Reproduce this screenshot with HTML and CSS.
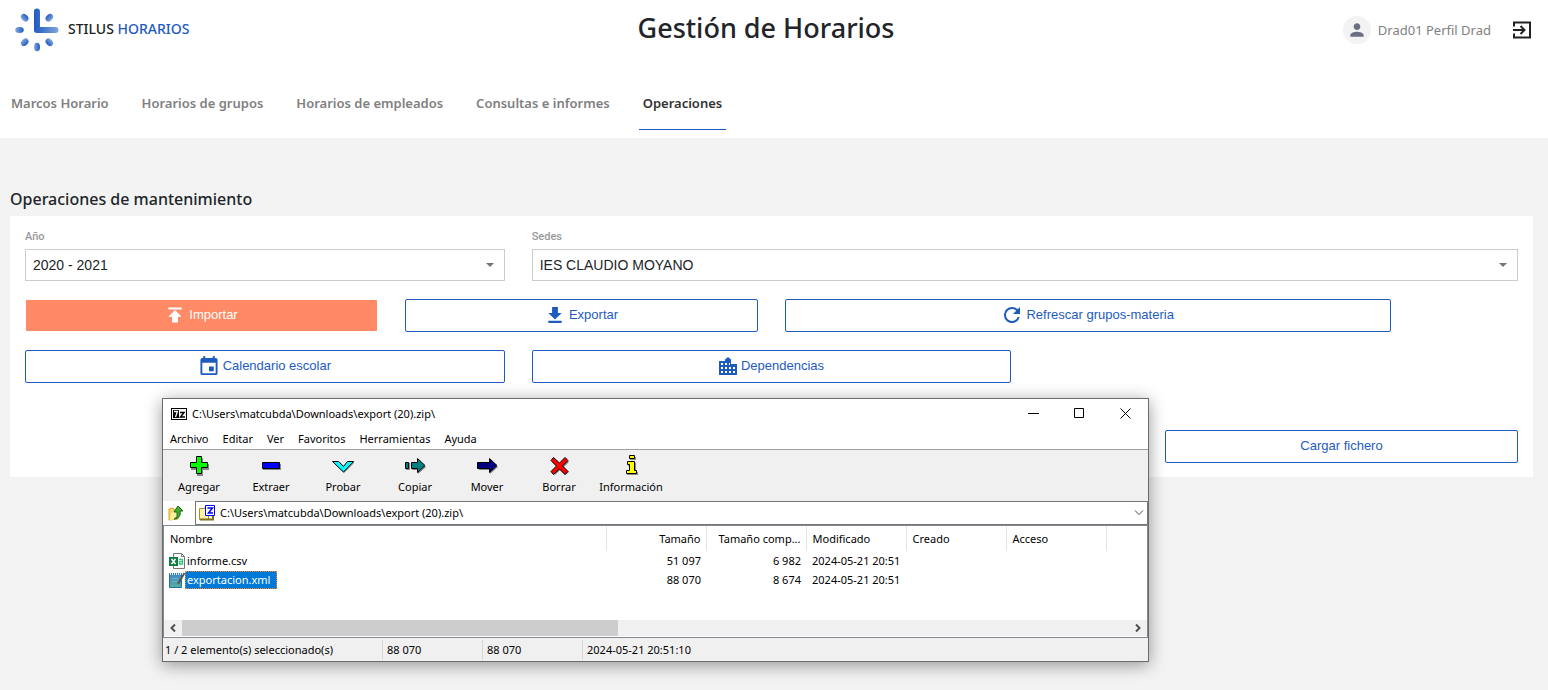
FILE: index.html
```html
<!DOCTYPE html>
<html lang="es">
<head>
  <meta charset="UTF-8" />
  <meta name="viewport" content="width=device-width, initial-scale=1.0" />
  <title>Stilus Horarios - Gestión de Horarios</title>
  <link rel="stylesheet" href="styles.css">
</head>
<body>
  <header class="header">
    <div class="topbar">
      <a class="brand" href="#">
        <svg width="44" height="44" viewBox="0 0 44 44">
          <defs>
            <linearGradient id="g-right"><stop offset="0" stop-color="#1d5bbf" /><stop offset="1" stop-color="#86a8dd" /></linearGradient>
            <linearGradient id="g-left"><stop offset="0" stop-color="#86a8dd" /><stop offset="1" stop-color="#1d5bbf" /></linearGradient>
            <linearGradient id="g-hand" gradientUnits="userSpaceOnUse" x1="19" y1="0" x2="44" y2="0"><stop offset="0" stop-color="#1d5bbf" /><stop offset="0.3" stop-color="#3b70c8" /><stop offset="1" stop-color="#86a8dd" /></linearGradient>
          </defs>
          <path d="M19 3.5a3 3 0 0 1 6 0V19h15.500a3 3 0 0 1 0 6H22a3 3 0 0 1-3-3z" fill="url(#g-hand)" />
          <ellipse cx="22" cy="39" rx="3" ry="4.300" fill="url(#g-left)" />
          <ellipse cx="4.500" cy="22" rx="4.300" ry="3" fill="url(#g-left)" />
          <ellipse cx="9.700" cy="9.700" rx="3.200" ry="4.200" transform="rotate(-45 9.700 9.700)" fill="url(#g-left)" />
          <ellipse cx="34.300" cy="9.700" rx="3.200" ry="4.200" transform="rotate(45 34.300 9.700)" fill="url(#g-right)" />
          <ellipse cx="9.700" cy="34.300" rx="3.200" ry="4.200" transform="rotate(45 9.700 34.300)" fill="url(#g-left)" />
          <ellipse cx="34.300" cy="34.300" rx="3.200" ry="4.200" transform="rotate(-45 34.300 34.300)" fill="url(#g-right)" />
        </svg>
        <span class="brand-name">STILUS <span class="brand-blue">HORARIOS</span></span>
      </a>
      <h1>Gestión de Horarios</h1>
      <div class="user">
        <span class="avatar">
          <svg width="24" height="24" viewBox="0 0 24 24" fill="#6b6f82"><path d="M12 12c2.210 0 4-1.790 4-4s-1.790-4-4-4-4 1.790-4 4 1.790 4 4 4zm0 2c-2.670 0-8 1.340-8 4v2h16v-2c0-2.660-5.330-4-8-4z" /></svg>
        </span>
        <span class="user-name">Drad01 Perfil Drad</span>
        <button class="logout" aria-label="Salir">
          <svg width="20" height="20" viewBox="0 0 20 20" fill="none" stroke="#222" stroke-width="2"><path d="M2 6.500V2.500h16v15H2v-4M1 10h11M8.500 6l4 4-4 4" /></svg>
        </button>
      </div>
    </div>
    <nav class="tabs">
      <a href="#">Marcos Horario</a>
      <a href="#">Horarios de grupos</a>
      <a href="#">Horarios de empleados</a>
      <a href="#">Consultas e informes</a>
      <a href="#" class="active">Operaciones</a>
    </nav>
  </header>

  <main class="content">
    <h2>Operaciones de mantenimiento</h2>
    <div class="card">
      <div class="field col-4">
        <label for="anio">Año</label>
        <div class="select-box">
          <select id="anio"><option>2020 - 2021</option></select>
        </div>
      </div>
      <div class="field col-8">
        <label for="sedes">Sedes</label>
        <div class="select-box">
          <select id="sedes"><option>IES CLAUDIO MOYANO</option></select>
        </div>
      </div>

      <button class="btn btn-active col-3">
        <svg width="20" height="20" viewBox="0 0 24 24"><path d="M4 3v2.500h16V3zM4 14h4.500v7h7v-7H20l-8-8z" /></svg>
        Importar
      </button>
      <button class="btn col-3">
        <svg width="20" height="20" viewBox="0 0 24 24"><path d="M20 9.500h-4.500v-7h-7v7H4l8 8zM4 19v2.500h16V19z" /></svg>
        Exportar
      </button>
      <button class="btn col-5">
        <svg width="20" height="20" viewBox="2 2 20 20"><path d="M17.650 6.350A7.960 7.960 0 0 0 12 4a8 8 0 1 0 7.730 10h-2.080A6 6 0 1 1 12 6c1.660 0 3.140.69 4.220 1.780L13 11h7V4z" /></svg>
        Refrescar grupos-materia
      </button>

      <button class="btn col-4 row-start">
        <svg width="20" height="20" viewBox="2 1 20 21"><path d="M17 12h-5v5h5zM16 1v2H8V1H6v2H5a2 2 0 0 0-2 2v14a2 2 0 0 0 2 2h14a2 2 0 0 0 2-2V5a2 2 0 0 0-2-2h-1V1zm3 18H5V8h14z" /></svg>
        Calendario escolar
      </button>
      <button class="btn col-4">
        <svg width="18" height="18" viewBox="0 0 18 18"><path fill-rule="evenodd" d="M0 4h6V2.500L9 0l3 2.500V7h6v11H0zM2 6v2h2V6zm0 4v2h2v-2zm0 4v2h2v-2zM6 6v2h2V6zm0 4v2h2v-2zm0 4v2h2v-2zM10 6v2h1V6zm0 4v2h2v-2zm0 4v2h2v-2zM14 10v2h2v-2zm0 4v2h2v-2z" /></svg>
        Dependencias
      </button>

      <button class="btn col-3 load">Cargar fichero</button>
    </div>
  </main>

  <section class="window" aria-label="7-Zip">
    <div class="title-bar">
      <svg width="16" height="12" viewBox="0 0 16 12"><path d="M0 0h16v12H0z" /><path d="M1 1h14v10H1z" fill="#fff" /><path d="M2 2h6v8H2z" /><path d="M3 3.500h3.500L4.500 9" fill="none" stroke="#fff" stroke-width="1.300" /><path d="M9 4.500h4l-3.500 4.500h4.500" fill="none" stroke="#000" stroke-width="1.500" /></svg>
      <span>C:\Users\matcubda\Downloads\export (20).zip\</span>
      <div class="window-controls">
        <button aria-label="Minimizar"><svg width="11" height="11" viewBox="0 0 11 11"><path d="M0 5.500h11" /></svg></button>
        <button aria-label="Maximizar"><svg width="11" height="11" viewBox="0 0 11 11"><path d="M.5.5h9v9h-9z" /></svg></button>
        <button aria-label="Cerrar"><svg width="11" height="11" viewBox="0 0 11 11"><path d="M.5.5l10 10M10.500.5l-10 10" /></svg></button>
      </div>
    </div>

    <div class="menu">
      <button>Archivo</button>
      <button>Editar</button>
      <button>Ver</button>
      <button>Favoritos</button>
      <button>Herramientas</button>
      <button>Ayuda</button>
    </div>

    <div class="toolbar">
      <button>
        <svg width="22" height="22" viewBox="0 0 22 22"><path d="M9 3h6v6h6v6h-6v6H9v-6H3V9h6z" fill="#888" /><path d="M8.500 1.500h5v6h6v5h-6v6h-5v-6h-6v-5h6z" fill="#0f0" stroke="#000" /></svg>
        Agregar
      </button>
      <button>
        <svg width="22" height="22" viewBox="0 0 22 22"><path d="M3 9h18v6H3z" fill="#888" /><path d="M2.500 7.500h17v6h-17z" fill="#00f" stroke="#000" /></svg>
        Extraer
      </button>
      <button>
        <svg width="22" height="22" viewBox="0 0 22 22"><path d="M1 7h7l4 4 4-4h7l-11 11z" fill="#888" /><path d="M.5 6.500h6l5 5 4-5h6L11.500 17z" fill="#0ff" stroke="#000" /></svg>
        Probar
      </button>
      <button>
        <svg width="22" height="22" viewBox="0 0 22 22"><path d="M2 8h4v7H2zM8 8h6V4l8 8-8 7v-4H8z" fill="#888" /><path d="M1.500 7.500h3v6h-3zM7.500 7.500h6v-4l7.500 7-7.500 7v-4h-6z" fill="#008080" stroke="#000" /></svg>
        Copiar
      </button>
      <button>
        <svg width="22" height="22" viewBox="0 0 22 22"><path d="M3 8h11V4l8 8-8 7v-4H3z" fill="#888" /><path d="M1.500 7.500h12v-4l7.500 7-7.500 7v-4h-12z" fill="#000080" stroke="#000" /></svg>
        Mover
      </button>
      <button>
        <svg width="22" height="22" viewBox="0 0 22 22"><path d="M6 4l6 5 5-5 4 3-5 5 5 5-4 3-5-5-5 5-3-3 5-5-5-5z" fill="#888" /><path d="M5.500 2.500l6 5.500 5.500-5.500 3 3-5.500 5.500 5.500 5.500-3 3-5.500-5.500-6 5.500-2.500-3 5.500-5.500L3 5.500z" fill="#f00" stroke="#000" /></svg>
        Borrar
      </button>
      <button>
        <svg width="22" height="22" viewBox="0 0 22 22"><path d="M10 2h6v3h-6zM8 8h8v9h2v3H7v-3h2v-6H8z" fill="#888" /><path d="M9.500.5h5v3h-5zM7.500 6.500h7v9h2v3h-10v-3h3v-6h-2z" fill="#ff0" stroke="#000" /></svg>
        Información
      </button>
    </div>

    <div class="address">
      <button class="up" aria-label="Subir un nivel">
        <svg width="16" height="16" viewBox="0 0 16 16"><path d="M1 4l4-1 1 2h4v9l-9 1z" fill="#f5d76e" stroke="#d9a520" /><path d="M3 8l6-2v8l-7 1z" fill="#fff0a0" /><path d="M6 14c4-2 3-4 3-7H6l4-6 5 5h-3c1 4-1 8-6 8z" fill="#3fae2a" stroke="#1e6b14" /></svg>
      </button>
      <div class="path">
        <svg width="16" height="16" viewBox="0 0 16 16"><path d="M.5 3.500h5l1-2h3v13H.5z" fill="#fff3a0" stroke="#a09030" /><path d="M1 14.500h13V9" fill="none" stroke="#806f20" stroke-width="2" /><path d="M6.500.5h9v10h-9z" fill="#fff" stroke="#00f" /><path d="M8.500 3h5l-4 5h4.500" fill="none" stroke="#00f" stroke-width="1.500" /></svg>
        <select aria-label="Ruta"><option>C:\Users\matcubda\Downloads\export (20).zip\</option></select>
        <svg class="chevron" width="10" height="6" viewBox="0 0 10 6"><path d="M1 .5l4 4 4-4" fill="none" stroke="#444" /></svg>
      </div>
    </div>

    <div class="list">
      <table>
        <colgroup>
          <col class="c-name"><col class="c-data"><col class="c-data"><col class="c-data"><col class="c-data"><col class="c-data"><col>
        </colgroup>
        <thead>
          <tr>
            <th>Nombre</th>
            <th class="num">Tamaño</th>
            <th class="num">Tamaño comp...</th>
            <th>Modificado</th>
            <th>Creado</th>
            <th>Acceso</th>
            <th></th>
          </tr>
        </thead>
        <tbody>
          <tr>
            <td>
              <div class="file">
                <svg width="16" height="16" viewBox="0 0 16 16"><path d="M4.500.5h8l3 3v12h-11z" fill="#fff" stroke="#777" /><path d="M12.500.5v3h3" fill="none" stroke="#777" /><path d="M0 4h9v9H0z" fill="#107c41" /><path d="M2.500 6l4 5M6.500 6l-4 5" stroke="#fff" stroke-width="1.500" /><path d="M10 6.500h3.500v4.500H10.500V8.700h3" fill="none" stroke="#33c481" stroke-width="1.300" /></svg>
                <span>informe.csv</span>
              </div>
            </td>
            <td class="num">51 097</td>
            <td class="num">6 982</td>
            <td>2024-05-21 20:51</td>
            <td></td>
            <td></td>
            <td></td>
          </tr>
          <tr>
            <td>
              <div class="file selected">
                <svg width="16" height="16" viewBox="0 0 16 16"><defs><linearGradient id="note" x2="0" y2="1"><stop offset="0" stop-color="#3f86c4" /><stop offset="1" stop-color="#55b09a" /></linearGradient></defs><path d="M.5 1.500h12v14H.5z" fill="url(#note)" stroke="#2b6ca3" /><path d="M1 2h11" stroke="#d8ecfa" stroke-width="2" stroke-dasharray="1 1" /><path d="M3 6.500h6M3 9.500h5" stroke="#6aaed0" /><path d="M15.500 1L9 12" stroke="#555" stroke-width="2" /></svg>
                <span>exportacion.xml</span>
              </div>
            </td>
            <td class="num">88 070</td>
            <td class="num">8 674</td>
            <td>2024-05-21 20:51</td>
            <td></td>
            <td></td>
            <td></td>
          </tr>
        </tbody>
      </table>
      <div class="scrollbar">
        <button aria-label="Izquierda"><svg width="6" height="8" viewBox="0 0 6 8"><path d="M5 .5L1.500 4 5 7.500" /></svg></button>
        <div class="track"><div class="thumb"></div></div>
        <button aria-label="Derecha"><svg width="6" height="8" viewBox="0 0 6 8"><path d="M1 .5L4.500 4 1 7.500" /></svg></button>
      </div>
    </div>

    <div class="status">
      <span class="status-main">1 / 2 elemento(s) seleccionado(s)</span>
      <span>88 070</span>
      <span>88 070</span>
      <span class="status-date">2024-05-21 20:51:10</span>
    </div>
  </section>
</body>
</html>
```
FILE: styles.css
```css
* {
  box-sizing: border-box;
}
body {
  margin: 0;
  min-height: 100vh;
  position: relative;
  background: #f3f3f3;
  color: #212529;
  font-family: "Noto Sans", "Open Sans", sans-serif;
}
button, select {
  font: inherit;
  color: inherit;
  background: none;
  border: none;
  border-radius: 0;
  margin: 0;
  padding: 0;
}
button {
  cursor: pointer;
}
a {
  text-decoration: none;
}
svg {
  display: block;
  flex: none;
}

/* cabecera */
.header {
  background: #fff;
  height: 138px;
}
.topbar {
  display: grid;
  grid-template-columns: 1fr auto 1fr;
  align-items: center;
  height: 60px;
  padding-right: 16px;
}
.brand {
  display: flex;
  align-items: center;
  gap: 9px;
  padding-left: 15px;
  font-size: 14px;
  font-weight: 500;
  color: #222;
}
.brand-name {
  padding-bottom: 4px;
}
.brand-blue {
  color: #1d5bbf;
}
h1 {
  margin: 0;
  padding-bottom: 4px;
  font-size: 27px;
  line-height: 56px;
  font-weight: 500;
}
.user {
  display: flex;
  align-items: center;
  justify-content: flex-end;
}
.avatar {
  display: flex;
  align-items: center;
  justify-content: center;
  width: 28px;
  height: 28px;
  border-radius: 50%;
  background: #f3f3f3;
}
.avatar svg {
  width: 20px;
}
.user-name {
  margin: 0 21px 0 7px;
  font-size: 13px;
  color: #808080;
}
.tabs {
  display: flex;
  gap: 25px;
  padding: 18px 7px 0;
}
.tabs a {
  padding: 0 4px;
  line-height: 51px;
  font-size: 13px;
  font-weight: 600;
  color: #808080;
  border-bottom: 1px solid transparent;
}
.tabs .active {
  color: #333;
  border-color: #1d5bbf;
}

/* contenido */
.content {
  padding: 48px 15px 0 10px;
}
h2 {
  margin: 0;
  font-size: 16px;
  line-height: 26px;
  font-weight: 500;
  padding-bottom: 4px;
}
.card {
  display: grid;
  grid-template-columns: repeat(12, 1fr);
  gap: 18px 27px;
  padding: 15px 15px 14px;
  background: #fff;
}
.col-3 { grid-column-end: span 3; }
.col-4 { grid-column-end: span 4; }
.col-5 { grid-column-end: span 5; }
.col-8 { grid-column-end: span 8; }
.row-start { grid-column-start: 1; }

.field label {
  display: block;
  font-family: Roboto, "Liberation Sans", sans-serif;
  font-size: 11px;
  line-height: 12px;
  font-weight: 500;
  color: #999;
  margin-bottom: 6px;
}
.select-box {
  position: relative;
}
.select-box select {
  appearance: none;
  width: 100%;
  height: 32px;
  padding: 0 7px;
  border: 1px solid #ccc;
  background: #fff;
  font-family: "Liberation Sans", Arial, sans-serif;
  font-size: 14px;
}
.select-box::after {
  content: "";
  position: absolute;
  right: 11px;
  top: 14px;
  border: 4px solid transparent;
  border-top-color: #757575;
  border-bottom: none;
}

.btn {
  display: flex;
  align-items: center;
  justify-content: center;
  gap: 4px;
  height: 33px;
  padding-bottom: 2px;
  border: 1px solid #1d5bbf;
  border-radius: 2px;
  background: #fff;
  color: #1d5bbf;
  font-family: "Liberation Sans", Arial, sans-serif;
  font-size: 13px;
}
.btn svg {
  fill: currentColor;
}
.btn-active {
  background: #ff8a65;
  border-color: #fff;
  color: #fff;
}
.load {
  grid-column-start: 10;
  grid-row: 4;
  margin-top: 29px;
}

/* ventana del zip */
.window {
  position: absolute;
  left: 162px;
  top: 398px;
  width: 987px;
  border: 1px solid #6b6b6b;
  background: #fff;
  color: #000;
  font-size: 11px;
  line-height: 16px;
  box-shadow: 0 3px 16px rgba(0, 0, 0, 0.4);
}
.title-bar {
  display: flex;
  align-items: center;
  height: 29px;
  padding-left: 8px;
  gap: 5px;
}
.window-controls {
  display: flex;
  margin-left: auto;
}
.window-controls button {
  display: flex;
  align-items: center;
  justify-content: center;
  width: 46px;
  height: 29px;
}
.window-controls svg {
  fill: none;
  stroke: #000;
}
.menu {
  display: flex;
  gap: 14px;
  height: 22px;
  padding: 0 7px;
  border-bottom: 1px solid #a0a0a0;
}
.toolbar {
  display: flex;
  height: 51px;
  background: #f0f0f0;
}
.toolbar button {
  display: flex;
  flex-direction: column;
  align-items: center;
  gap: 2px;
  width: 72px;
  padding-top: 5px;
}
.address {
  display: flex;
  height: 24px;
}
.up {
  width: 32px;
  padding-left: 5px;
}
.path {
  flex: 1;
  position: relative;
  display: flex;
  align-items: center;
  gap: 5px;
  padding: 0 4px 0 3px;
  border: 1px solid #777;
}
.path select {
  appearance: none;
  flex: 1;
}
.chevron {
  position: absolute;
  right: 3px;
}
.list {
  border: 1px solid #828790;
}
table {
  width: 100%;
  table-layout: fixed;
  border-collapse: collapse;
  margin-bottom: 31px;
}
.c-name {
  width: 442px;
}
.c-data {
  width: 100px;
}
th, td {
  padding: 0 6px;
  font-weight: 400;
  text-align: left;
  white-space: nowrap;
}
th {
  height: 25px;
  border-right: 1px solid #e5e5e5;
}
th:last-child {
  border-right: none;
}
td {
  height: 19px;
}
td:first-child {
  padding-left: 5px;
}
.num {
  text-align: right;
  padding: 0 5px 0 0;
}
.file {
  display: flex;
  align-items: center;
}
.file span {
  padding: 0 6px 0 1px;
  border: 1px dotted transparent;
}
.selected span {
  background: #0078d7;
  border-color: #ff8728;
  color: #fff;
}
.scrollbar {
  display: flex;
  height: 16px;
  margin-bottom: 1px;
  background: #f0f0f0;
}
.scrollbar button {
  display: flex;
  align-items: center;
  justify-content: center;
  width: 18px;
}
.scrollbar svg {
  fill: none;
  stroke: #505050;
  stroke-width: 2;
}
.track {
  flex: 1;
}
.thumb {
  width: 46%;
  height: 100%;
  background: #cdcdcd;
}
.status {
  display: flex;
  height: 23px;
  padding: 2px 0 1px 2px;
  background: #f0f0f0;
}
.status span {
  width: 100px;
  padding-left: 4px;
  line-height: 20px;
  border-left: 1px solid #d7d7d7;
}
.status .status-main {
  width: 217px;
  padding-left: 0;
  border-left: none;
}
.status .status-date {
  flex: 1;
}
```
